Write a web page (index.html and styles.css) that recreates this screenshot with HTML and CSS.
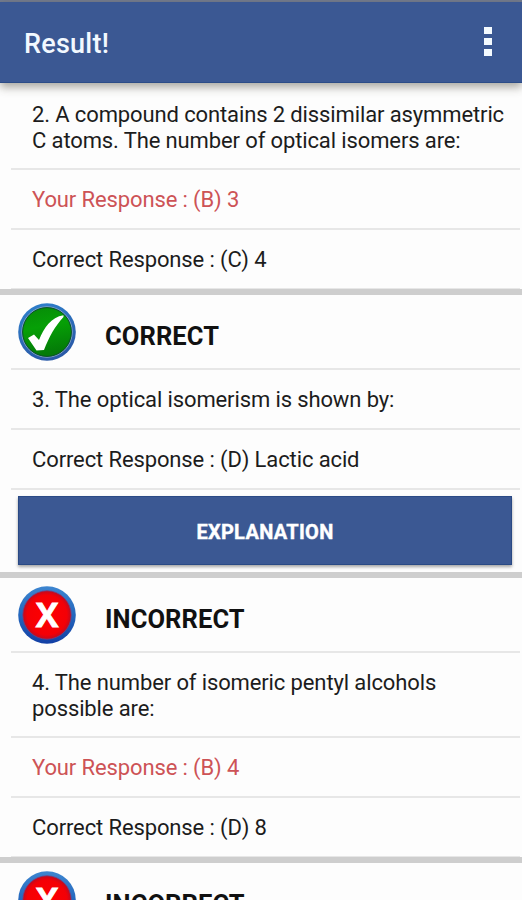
FILE: index.html
```html
<!DOCTYPE html>
<html lang="en">
<head>
  <meta charset="UTF-8" />
  <meta name="viewport" content="width=device-width, initial-scale=1.0" />
  <title>Result!</title>
  <link rel="stylesheet" href="styles.css">
</head>
<body>
  <!-- Shared gradients and status icons -->
  <svg class="icon-defs" width="0" height="0">
    <defs>
      <linearGradient id="ring" x1="0" y1="0" x2="0" y2="1">
        <stop offset="0" stop-color="#3d86d0" />
        <stop offset="0.5" stop-color="#2467bd" />
        <stop offset="1" stop-color="#123fa5" />
      </linearGradient>
      <linearGradient id="ringSoft" x1="0" y1="0" x2="0.4" y2="1">
        <stop offset="0" stop-color="#2f83cf" />
        <stop offset="1" stop-color="#2a5aa8" />
      </linearGradient>
      <linearGradient id="green" x1="0" y1="0" x2="0.2" y2="1">
        <stop offset="0" stop-color="#078a08" />
        <stop offset="0.45" stop-color="#06a006" />
        <stop offset="1" stop-color="#047b08" />
      </linearGradient>
      <radialGradient id="red">
        <stop offset="0" stop-color="#ff0000" />
        <stop offset="0.82" stop-color="#f40006" />
        <stop offset="1" stop-color="#bf0a20" />
      </radialGradient>
      <symbol id="icon-correct" viewBox="0 0 58 58">
        <circle cx="29" cy="29" r="28.8" fill="url(#ringSoft)" />
        <circle cx="29" cy="29" r="25.2" fill="none" stroke="#8aa6c4" stroke-width="1" />
        <circle cx="29" cy="29" r="24.4" fill="url(#green)" stroke="#0a5226" stroke-width="1" />
        <path d="M10 35 L16 31.5 L21 37 C26 25 33 14 45.500 12.3 L45.500 14 C37 23 31 34 26 47 L18.500 47.500 Z" fill="#fff" />
      </symbol>
      <symbol id="icon-incorrect" viewBox="0 0 58 58">
        <circle cx="29" cy="29" r="28.8" fill="url(#ring)" />
        <circle cx="29" cy="29" r="24.200" fill="url(#red)" stroke="#7a3c78" stroke-width="0.8" />
        <text class="icon-x" x="29" y="41" text-anchor="middle">X</text>
      </symbol>
    </defs>
  </svg>

  <div class="status-strip"></div>

  <!-- APP BAR -->
  <header class="app-bar">
    <h1>Result!</h1>
    <button class="menu-btn" type="button" aria-label="More options">
      <span></span><span></span><span></span>
    </button>
  </header>

  <main class="results">
    <section class="result first">
      <p class="row question">2. A compound contains 2 dissimilar asymmetric<br>C atoms. The number of optical isomers are:</p>
      <p class="row wrong">Your Response : (B) 3</p>
      <p class="row last">Correct Response : (C) 4</p>
    </section>

    <section class="result">
      <div class="row result-head">
        <svg class="icon"><use href="#icon-correct" /></svg>
        <h2>CORRECT</h2>
      </div>
      <p class="row">3. The optical isomerism is shown by:</p>
      <p class="row">Correct Response : (D) Lactic acid</p>
      <button class="btn-explain" type="button">EXPLANATION</button>
    </section>

    <section class="result">
      <div class="row result-head">
        <svg class="icon"><use href="#icon-incorrect" /></svg>
        <h2>INCORRECT</h2>
      </div>
      <p class="row question">4. The number of isomeric pentyl alcohols<br>possible are:</p>
      <p class="row wrong">Your Response : (B) 4</p>
      <p class="row last">Correct Response : (D) 8</p>
    </section>

    <section class="result">
      <div class="row result-head">
        <svg class="icon"><use href="#icon-incorrect" /></svg>
        <h2>INCORRECT</h2>
      </div>
    </section>
  </main>
</body>
</html>
```
FILE: styles.css
```css
/* GLOBAL */
* { box-sizing:border-box; }
body { font-family:Roboto, sans-serif; margin:0; height:900px; overflow:hidden; background:#fdfdfd; color:#1c1c1c; }
h1, h2, p { margin:0; }
.icon-defs { display:block; }

/* APP BAR */
.status-strip { height:2px; background:#737b8e; }
.app-bar { height:81px; padding:3px 30px 0 24px; display:flex; align-items:center; justify-content:space-between;
  background:#3b5893; border-bottom:1px solid #2c4c87; box-shadow:0 4px 9px rgba(60,55,40,0.45); }
.app-bar h1 { font-size:27px; font-weight:500; letter-spacing:0.25px; color:#f2f8ff; }
.menu-btn { display:flex; flex-direction:column; gap:4px; margin-top:-4px; padding:0; border:none; background:none; }
.menu-btn span { width:8px; height:7px; background:#f4faff; }

/* RESULTS */
.result { padding:0 2px 0 11px; border-bottom:6px solid #cecece; }
.row { height:60px; padding:2px 0 0 21px; display:flex; align-items:center; border-bottom:2px solid #e7e7e7;
  font-size:22px; line-height:26px; letter-spacing:-0.12px; white-space:nowrap; }
.row.question { height:85px; padding-top:2px; }
.first .question { height:87px; padding-top:4px; }
.row.last { height:59px; border-bottom-width:1px; }
.row.wrong { color:#cd5356; }

.row.result-head { height:75px; padding:0 0 0 7px; align-items:flex-start; }
.result-head h2 { margin:28px 0 0 29px; font-size:25.5px; line-height:26px; font-weight:700; letter-spacing:0.1px; color:#111; }
.icon { width:58px; height:58px; margin-top:8px; flex:none; }
.icon-x { font:bold 34px "Open Sans", sans-serif; fill:#fff; stroke:#fff; stroke-width:0.8px; }

/* BUTTON */
.btn-explain { display:block; width:494px; height:69px; margin:6px 0 7px 7px; padding:2px 0 0; border:1px solid #2a4a85;
  background:#3b5893; color:#fff; font:700 20px Roboto, sans-serif; letter-spacing:0.3px; -webkit-text-stroke:0.4px #fff; box-shadow:0 2px 3px rgba(0,0,0,0.35); }
```
